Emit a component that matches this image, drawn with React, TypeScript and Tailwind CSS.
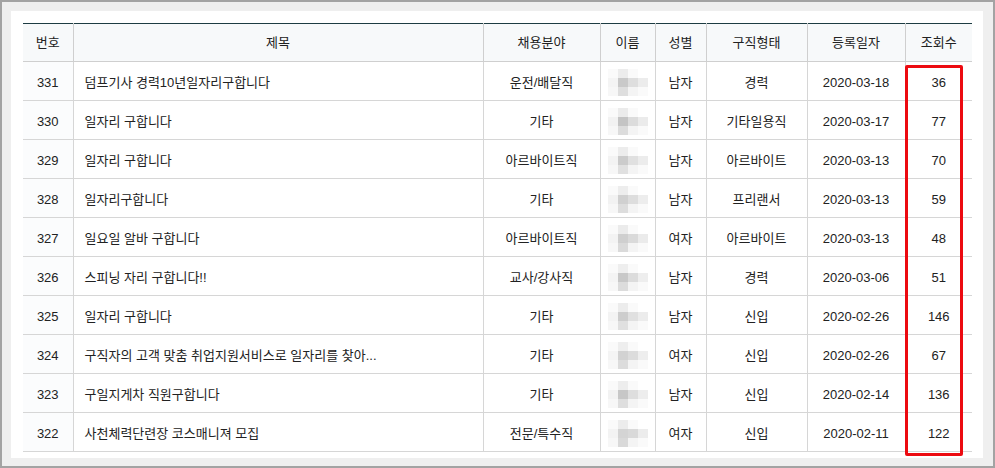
import React from 'react'

type Row = {
  no: number
  title: string
  field: string
  gender: string
  kind: string
  date: string
  views: number
}

const rows: Row[] = [
  { no: 331, title: '덤프기사 경력10년일자리구합니다', field: '운전/배달직', gender: '남자', kind: '경력', date: '2020-03-18', views: 36 },
  { no: 330, title: '일자리 구합니다', field: '기타', gender: '남자', kind: '기타일용직', date: '2020-03-17', views: 77 },
  { no: 329, title: '일자리 구합니다', field: '아르바이트직', gender: '남자', kind: '아르바이트', date: '2020-03-13', views: 70 },
  { no: 328, title: '일자리구합니다', field: '기타', gender: '남자', kind: '프리랜서', date: '2020-03-13', views: 59 },
  { no: 327, title: '일요일 알바 구합니다', field: '아르바이트직', gender: '여자', kind: '아르바이트', date: '2020-03-13', views: 48 },
  { no: 326, title: '스피닝 자리 구합니다!!', field: '교사/강사직', gender: '남자', kind: '경력', date: '2020-03-06', views: 51 },
  { no: 325, title: '일자리 구합니다', field: '기타', gender: '남자', kind: '신입', date: '2020-02-26', views: 146 },
  { no: 324, title: '구직자의 고객 맞춤 취업지원서비스로 일자리를 찾아...', field: '기타', gender: '여자', kind: '신입', date: '2020-02-26', views: 67 },
  { no: 323, title: '구일지게차 직원구합니다', field: '기타', gender: '남자', kind: '신입', date: '2020-02-14', views: 136 },
  { no: 322, title: '사천체력단련장 코스매니져 모집', field: '전문/특수직', gender: '여자', kind: '신입', date: '2020-02-11', views: 122 },
]

// blurred name mosaic, shades per row
const mosaics = [
  ['#f4f4f4', '#c9c9c9', '#dedede', '#ececec'],
  ['#f2f2f2', '#c4c4c4', '#dcdcdc', '#ebebeb'],
  ['#f3f3f3', '#cbcbcb', '#e0e0e0', '#ececec'],
  ['#f2f2f2', '#d0d0d0', '#dddddd', '#ededed'],
  ['#f3f3f3', '#cfcfcf', '#dadada', '#ebebeb'],
  ['#f4f4f4', '#c8c8c8', '#dcdcdc', '#eeeeee'],
  ['#f3f3f3', '#cdcdcd', '#e0e0e0', '#ececec'],
  ['#f4f4f4', '#d2d2d2', '#dcdcdc', '#eeeeee'],
  ['#f2f2f2', '#c7c7c7', '#dedede', '#ededed'],
  ['#f3f3f3', '#d4d4d4', '#d9d9d9', '#ececec'],
]

function Mosaic({ shades }: { shades: string[] }) {
  return (
    <div className="mx-auto flex w-[40px] flex-col">
      <div className="flex h-[9px]">
        <div className="w-[10px] bg-[#fafafa]" />
        <div className="w-[10px]" style={{ background: shades[3] }} />
        <div className="w-[10px] bg-[#fafafa]" />
        <div className="w-[10px]" />
      </div>
      <div className="flex h-[9px]">
        {shades.map((c, i) => (
          <div key={i} className="w-[10px]" style={{ background: c }} />
        ))}
      </div>
      <div className="flex h-[9px]">
        <div className="w-[10px] bg-[#f7f7f7]" />
        <div className="w-[10px]" style={{ background: shades[2] }} />
        <div className="w-[10px] bg-[#f4f4f4]" />
        <div className="w-[10px] bg-[#fafafa]" />
      </div>
    </div>
  )
}

const th = 'h-[38px] border-b border-l border-[#cfcfcf] bg-[#f7f9fa] font-normal text-[13px] text-[#222]'
const td = 'border-b border-l border-[#d6d6d6] pt-[3px] text-center text-[13px] text-[#222]'

export default function App() {
  return (
    <div className="h-[468px] w-[995px] border-2 border-[#a3a3a3] bg-[#efefef] p-[9px] font-['Liberation_Sans','Noto_Sans_CJK_KR',sans-serif]">
      <div className="h-[447px] w-[972px] bg-white pl-[12px] pt-[12px]">
        <div className="relative w-[949px]">
          <table className="w-[949px] table-fixed border-collapse border-t border-t-[#1d3c42]">
            <colgroup>
              <col className="w-[50px]" />
              <col className="w-[410px]" />
              <col className="w-[117px]" />
              <col className="w-[55px]" />
              <col className="w-[51px]" />
              <col className="w-[101px]" />
              <col className="w-[98px]" />
              <col className="w-[67px]" />
            </colgroup>
            <thead>
              <tr>
                <th className={th + ' border-l-0'}>번호</th>
                <th className={th}>제목</th>
                <th className={th}>채용분야</th>
                <th className={th}>이름</th>
                <th className={th}>성별</th>
                <th className={th}>구직형태</th>
                <th className={th}>등록일자</th>
                <th className={th}>조회수</th>
              </tr>
            </thead>
            <tbody>
              {rows.map((r, i) => (
                <tr key={r.no} className="h-[39px]">
                  <td className={td + ' border-l-0 bg-[#fbfcfd]'}>{r.no}</td>
                  <td className={td + ' truncate pl-[11px] text-left'}>{r.title}</td>
                  <td className={td}>{r.field}</td>
                  <td className={td}>
                    <Mosaic shades={mosaics[i]} />
                  </td>
                  <td className={td}>{r.gender}</td>
                  <td className={td}>{r.kind}</td>
                  <td className={td}>{r.date}</td>
                  <td className={td}>{r.views}</td>
                </tr>
              ))}
            </tbody>
          </table>
          <div className="absolute left-[882px] top-[42px] h-[391px] w-[58px] rounded-[2px] border-[3px] border-[#ec0a10]" />
        </div>
      </div>
    </div>
  )
}
